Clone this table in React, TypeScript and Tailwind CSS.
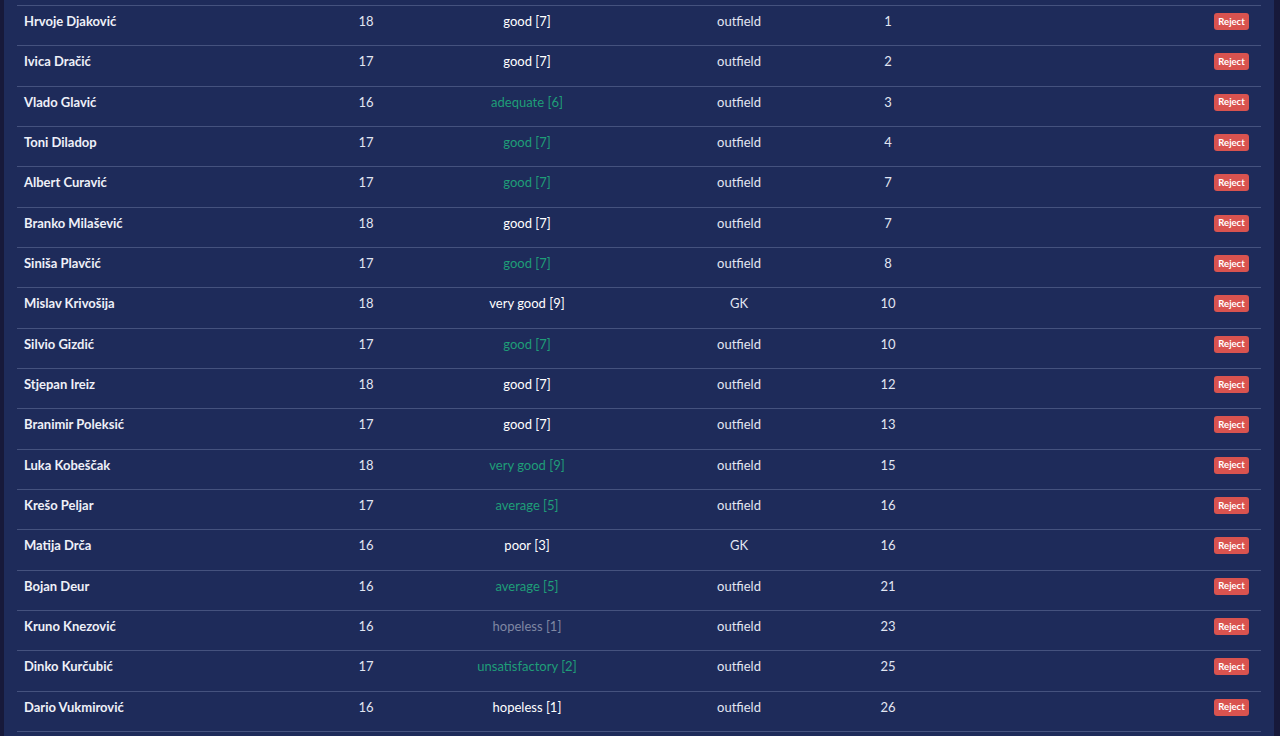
import React from 'react';

type Player = { name: string; age: number; rating: string; tone: 'white' | 'green' | 'gray'; pos: string; num: number };

const players: Player[] = [
  { name: 'Hrvoje Djaković', age: 18, rating: 'good [7]', tone: 'white', pos: 'outfield', num: 1 },
  { name: 'Ivica Dračić', age: 17, rating: 'good [7]', tone: 'white', pos: 'outfield', num: 2 },
  { name: 'Vlado Glavić', age: 16, rating: 'adequate [6]', tone: 'green', pos: 'outfield', num: 3 },
  { name: 'Toni Diladop', age: 17, rating: 'good [7]', tone: 'green', pos: 'outfield', num: 4 },
  { name: 'Albert Curavić', age: 17, rating: 'good [7]', tone: 'green', pos: 'outfield', num: 7 },
  { name: 'Branko Milašević', age: 18, rating: 'good [7]', tone: 'white', pos: 'outfield', num: 7 },
  { name: 'Siniša Plavčić', age: 17, rating: 'good [7]', tone: 'green', pos: 'outfield', num: 8 },
  { name: 'Mislav Krivošija', age: 18, rating: 'very good [9]', tone: 'white', pos: 'GK', num: 10 },
  { name: 'Silvio Gizdić', age: 17, rating: 'good [7]', tone: 'green', pos: 'outfield', num: 10 },
  { name: 'Stjepan Ireiz', age: 18, rating: 'good [7]', tone: 'white', pos: 'outfield', num: 12 },
  { name: 'Branimir Poleksić', age: 17, rating: 'good [7]', tone: 'white', pos: 'outfield', num: 13 },
  { name: 'Luka Kobeščak', age: 18, rating: 'very good [9]', tone: 'green', pos: 'outfield', num: 15 },
  { name: 'Krešo Peljar', age: 17, rating: 'average [5]', tone: 'green', pos: 'outfield', num: 16 },
  { name: 'Matija Drča', age: 16, rating: 'poor [3]', tone: 'white', pos: 'GK', num: 16 },
  { name: 'Bojan Deur', age: 16, rating: 'average [5]', tone: 'green', pos: 'outfield', num: 21 },
  { name: 'Kruno Knezović', age: 16, rating: 'hopeless [1]', tone: 'gray', pos: 'outfield', num: 23 },
  { name: 'Dinko Kurčubić', age: 17, rating: 'unsatisfactory [2]', tone: 'green', pos: 'outfield', num: 25 },
  { name: 'Dario Vukmirović', age: 16, rating: 'hopeless [1]', tone: 'white', pos: 'outfield', num: 26 },
];

const toneClass = {
  white: 'text-white',
  green: 'text-[#1f9e78]',
  gray: 'text-[#7f87a3]',
};

export default function App() {
  return (
    <div className="h-[736px] w-[1280px] overflow-hidden bg-[#17193a] flex font-['Lato',sans-serif]">
      <div className="ml-[4px] w-[1270px] h-full bg-[#1e2b5a] pl-[13px] pr-[13px] pt-[5px]">
        <div className="border-b border-[#45527e]">
          {players.map((p, i) => (
            <div
              key={i}
              className="grid grid-cols-[273px_152px_170px_254px_44px_1fr] h-[40.33px] border-t-[1.5px] border-[#45527e] text-[13px] leading-[18px] pt-[6px]"
            >
              <div className="pl-[7px] font-bold text-[#eef0f8]">{p.name}</div>
              <div className="text-center text-[#e2e6f2]">{p.age}</div>
              <div className={`text-center ${toneClass[p.tone]}`}>{p.rating}</div>
              <div className="text-center text-[#e2e6f2]">{p.pos}</div>
              <div className="text-center text-[#e2e6f2]">{p.num}</div>
              <div className="flex justify-end pr-[12px] pt-[1px]">
                <button className="h-[17px] w-[35px] rounded-[3px] bg-[#d9534f] text-white text-[9.5px] font-bold leading-none">
                  Reject
                </button>
              </div>
            </div>
          ))}
        </div>
      </div>
    </div>
  );
}
